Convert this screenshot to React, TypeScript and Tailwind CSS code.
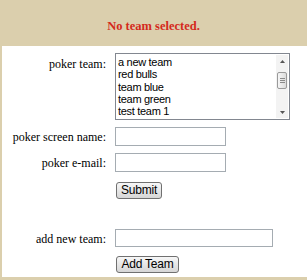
import React from 'react';

const teams = ['a new team', 'red bulls', 'team blue', 'team green', 'test team 1'];

const serif = { fontFamily: '"Liberation Serif", "Times New Roman", serif' };
const sans = { fontFamily: '"Liberation Sans", Arial, sans-serif' };

const Button: React.FC<{ label: string; width: string }> = ({ label, width }) => (
  <button
    className={`${width} h-[17px] rounded-[3px] border border-[#707070] bg-gradient-to-b from-[#f7f7f7] to-[#d6d6d6] text-[12px] leading-[12px] tracking-[-0.2px] text-black`}
    style={sans}
  >
    {label}
  </button>
);

const App: React.FC = () => {
  return (
    <div className="w-[307px] h-[280px] bg-[#dbcfad] overflow-hidden flex flex-col">
      <div className="h-[46px] flex items-center justify-center pt-[6px]">
        <span className="text-[12.5px] font-bold text-[#d42a1c]" style={serif}>No team selected.</span>
      </div>

      <div className="ml-[2px] h-[231px] bg-white pt-[7px] text-[12px] text-black" style={serif}>
        <div className="grid grid-cols-[104px_1fr] gap-x-[9px] items-start">
          {/* poker team */}
          <div className="text-right leading-[16px] pt-[3px]">poker team:</div>
          <div className="w-[175px] h-[67px] border border-[#828790] flex">
            <div className="flex-1 pl-[2px] pt-[2px] text-[11px] leading-[12.3px] tracking-[-0.3px]" style={sans}>
              {teams.map(t => (
                <div key={t} className="h-[12.3px] whitespace-nowrap">{t}</div>
              ))}
            </div>
            <div className="w-[12px] my-[1px] mr-[1px] bg-[#f3f3f3] flex flex-col items-center">
              <div className="h-[12px] flex items-center justify-center">
                <svg width="5" height="3" viewBox="0 0 5 3"><path d="M0 3 L2.5 0 L5 3 Z" fill="#555" /></svg>
              </div>
              <div className="mt-[5px] w-[10px] h-[17px] border border-[#9a9a9a] rounded-[2px] bg-gradient-to-r from-[#f6f6f6] to-[#dcdcdc] flex flex-col items-center justify-center gap-[1px]">
                <div className="w-[5px] h-px bg-[#8a8a8a]" />
                <div className="w-[5px] h-px bg-[#8a8a8a]" />
                <div className="w-[5px] h-px bg-[#8a8a8a]" />
              </div>
              <div className="flex-1" />
              <div className="h-[12px] flex items-center justify-center">
                <svg width="5" height="3" viewBox="0 0 5 3"><path d="M0 0 L2.5 3 L5 0 Z" fill="#555" /></svg>
              </div>
            </div>
          </div>

          {/* screen name */}
          <div className="text-right leading-[16px] mt-[9px]">poker screen name:</div>
          <input className="mt-[7px] w-[111px] h-[19px] border border-[#a5acb2] outline-none" />

          {/* e-mail */}
          <div className="text-right leading-[16px] mt-[9px]">poker e-mail:</div>
          <input className="mt-[7px] w-[111px] h-[19px] border border-[#a5acb2] outline-none" />

          <div />
          <div className="mt-[9px] pl-[1px]">
            <Button label="Submit" width="w-[46px]" />
          </div>

          {/* add new team */}
          <div className="text-right leading-[16px] mt-[32px]">add new team:</div>
          <input className="mt-[30px] w-[158px] h-[18px] border border-[#a5acb2] outline-none" />

          <div />
          <div className="mt-[8px] pl-[1px]">
            <Button label="Add Team" width="w-[63px]" />
          </div>
        </div>
      </div>
    </div>
  );
};

export default App;
